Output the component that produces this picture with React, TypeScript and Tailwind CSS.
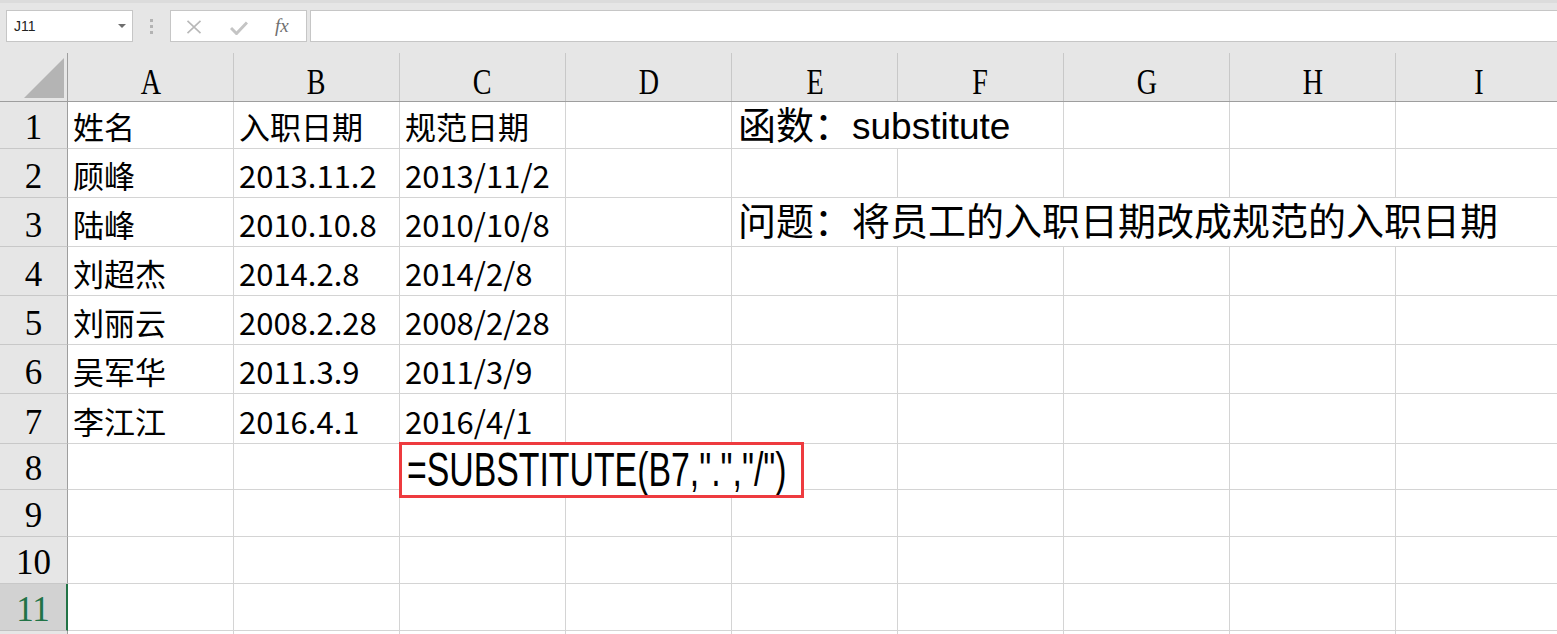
import React from "react";

const COLS = ["A", "B", "C", "D", "E", "F", "G", "H", "I"];
const ROW_H = [47, 49, 49, 49, 49, 49, 50, 46, 47, 47, 47];

const DATA: string[][] = [
  ["姓名", "入职日期", "规范日期"],
  ["顾峰", "2013.11.2", "2013/11/2"],
  ["陆峰", "2010.10.8", "2010/10/8"],
  ["刘超杰", "2014.2.8", "2014/2/8"],
  ["刘丽云", "2008.2.28", "2008/2/28"],
  ["吴军华", "2011.3.9", "2011/3/9"],
  ["李江江", "2016.4.1", "2016/4/1"],
];

const cjk = { fontFamily: '"Noto Sans CJK SC", "Noto Sans", sans-serif' };
const serif = { fontFamily: '"Liberation Serif", "DejaVu Serif", serif' };
const arial = { fontFamily: '"Liberation Sans", Arial, sans-serif' };

type Cell = { span: number; text?: React.ReactNode; big?: boolean };

function rowCells(r: number): Cell[] {
  const cells: Cell[] = [];
  const d = DATA[r - 1];
  for (let c = 0; c < 3; c++) cells.push({ span: 1, text: d ? d[c] : undefined });
  cells.push({ span: 1 }); // D
  if (r === 1) {
    cells.push({
      span: 2,
      big: true,
      text: (
        <>
          <span style={cjk}>函数：</span>
          <span className="text-[37px]" style={arial}>
            substitute
          </span>
        </>
      ),
    });
    cells.push({ span: 1 }, { span: 1 }, { span: 1 });
  } else if (r === 3) {
    cells.push({ span: 5, text: "问题：将员工的入职日期改成规范的入职日期", big: true });
  } else {
    for (let c = 0; c < 5; c++) cells.push({ span: 1 });
  }
  return cells;
}

function Toolbar() {
  return (
    <div className="relative h-[53px] bg-[#e6e6e6] border-t-[3px] border-[#dcdcdc]">
      {/* name box */}
      <div className="absolute left-[6px] top-[7px] w-[127px] h-[32px] bg-white border border-[#c6c6c6] flex items-center">
        <span className="pl-[7px] text-[14px] text-[#222]" style={arial}>
          J11
        </span>
        <svg className="absolute left-[111px] top-[13px]" width="8" height="5" viewBox="0 0 8 5">
          <path d="M0 0 L8 0 L4 4 Z" fill="#6e6e6e" />
        </svg>
      </div>
      {/* dots */}
      <div className="absolute left-[150px] top-[16px] flex flex-col gap-[3px]">
        <div className="w-[3px] h-[3px] bg-[#b3b3b3]" />
        <div className="w-[3px] h-[3px] bg-[#b3b3b3]" />
        <div className="w-[3px] h-[3px] bg-[#b3b3b3]" />
      </div>
      {/* buttons box */}
      <div className="absolute left-[170px] top-[7px] w-[137px] h-[32px] bg-white border border-[#c6c6c6]">
        <svg className="absolute left-[15px] top-[9px]" width="16" height="14" viewBox="0 0 16 14">
          <path d="M1.5 0.8 L14.5 13.2 M14.5 0.8 L1.5 13.2" stroke="#b8b8b8" strokeWidth="1.6" />
        </svg>
        <svg className="absolute left-[59px] top-[10px]" width="18" height="14" viewBox="0 0 18 14">
          <path d="M1 7 L6.5 12.5 L17 1.5" stroke="#c4c4c4" strokeWidth="3" fill="none" />
        </svg>
        <span className="absolute left-[104px] top-[3px] text-[19px] italic text-[#6f6f6f] leading-[24px]" style={serif}>
          fx
        </span>
      </div>
      {/* formula input */}
      <div className="absolute left-[310px] top-[7px] w-[1260px] h-[32px] bg-white border border-[#c6c6c6]" />
    </div>
  );
}

function HeaderRow() {
  return (
    <div className="flex h-[49px] bg-[#e6e6e6] border-b border-[#9e9e9e]">
      <div className="relative w-[68px] shrink-0 border-r border-[#9e9e9e]">
        <svg className="absolute left-[24px] top-[5px]" width="40" height="40" viewBox="0 0 40 40">
          <path d="M40 0 L40 40 L0 40 Z" fill="#b4b4b4" />
        </svg>
      </div>
      {COLS.map((c) => (
        <div key={c} className="w-[166px] shrink-0 border-r border-[#c8c8c8] flex items-end justify-center pb-[1px]">
          <span className="text-[36px] leading-none text-black scale-x-[0.78] inline-block" style={serif}>
            {c}
          </span>
        </div>
      ))}
    </div>
  );
}

function Row({ r }: { r: number }) {
  const selected = r === 11;
  return (
    <div className="flex" style={{ height: ROW_H[r - 1] }}>
      <div
        className={
          selected
            ? "w-[68px] shrink-0 bg-[#d2d2d2] border-b border-[#c0c0c0] border-r-2 border-r-[#217346] flex items-end justify-center pb-[3px]"
            : "w-[68px] shrink-0 bg-[#e6e6e6] border-b border-[#c8c8c8] border-r border-r-[#9e9e9e] flex items-end justify-center pb-[3px]"
        }
      >
        <span className={selected ? "text-[35px] leading-none text-[#217346]" : "text-[35px] leading-none text-black"} style={serif}>
          {r}
        </span>
      </div>
      {rowCells(r).map((cell, i) => (
        <div
          key={i}
          className={
            cell.big
              ? "shrink-0 border-r border-b border-[#d4d4d4] flex items-end whitespace-nowrap overflow-visible pl-[6px]"
              : "shrink-0 border-r border-b border-[#d4d4d4] flex items-end whitespace-nowrap overflow-visible pl-[5px] pb-[7px]"
          }
          style={{ width: 166 * cell.span, paddingBottom: cell.big ? (r === 1 ? 3 : 8) : undefined }}
        >
          {cell.text ? (
            <span className={cell.big ? "text-[38px] leading-none text-black" : "text-[31px] leading-none text-black"} style={cjk}>
              {cell.text}
            </span>
          ) : null}
        </div>
      ))}
    </div>
  );
}

export default function App() {
  return (
    <div className="relative w-[1557px] h-[634px] overflow-hidden bg-white">
      <Toolbar />
      <HeaderRow />
      {ROW_H.map((_, i) => (
        <Row key={i} r={i + 1} />
      ))}
      <div className="flex h-[10px]">
        <div className="w-[68px] shrink-0 bg-[#e6e6e6] border-r border-[#9e9e9e]" />
        {COLS.map((c) => (
          <div key={c} className="w-[166px] shrink-0 border-r border-[#d4d4d4]" />
        ))}
      </div>
      {/* formula text box overlay */}
      <div className="absolute left-[399px] top-[442px] w-[405px] h-[56px] bg-white border-[3px] border-[#ee3b3f] overflow-hidden">
        <span
          className="absolute left-[5px] top-[0px] text-[49px] leading-none text-black whitespace-nowrap inline-block origin-left scale-x-[0.69]"
          style={arial}
        >
          =SUBSTITUTE(B7,".","/")
        </span>
      </div>
    </div>
  );
}
